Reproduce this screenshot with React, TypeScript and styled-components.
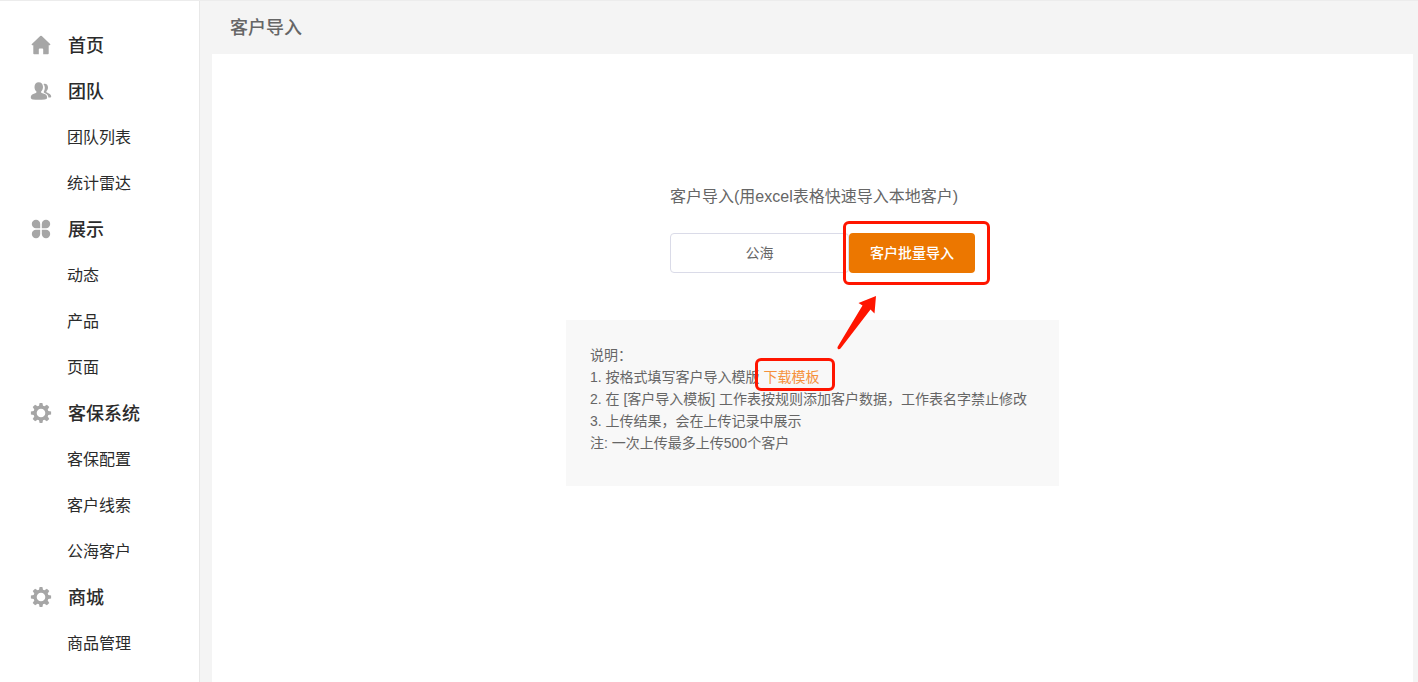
import React from "react";
import styled, { createGlobalStyle } from "styled-components";

const GlobalStyle = createGlobalStyle`
  *, *::before, *::after { box-sizing: border-box; }
  body {
    margin: 0;
    background: #f4f4f4;
    color: #666666;
    font-family: "Liberation Sans", "Noto Sans CJK SC", sans-serif;
    font-size: 14px;
  }
  button, select { font-family: inherit; }
`;

const Page = styled.div`
  display: flex;
  min-height: 100vh;
  border-top: 1px solid #ececec;
`;

const Sidebar = styled.nav`
  flex: none;
  width: 200px;
  padding: 21px 0 0;
  background: #ffffff;
  border-right: 1px solid #e8e8e8;
`;

const NavList = styled.ul`
  margin: 0;
  padding: 0;
  list-style: none;
`;

const NavLink = styled.a`
  display: flex;
  align-items: center;
  height: 46px;
  padding-bottom: 2px;
  color: #2b2b2b;
  text-decoration: none;
`;

const SectionLink = styled(NavLink)`
  gap: 16px;
  padding-left: 30px;
  font-size: 18px;
  font-weight: 500;
`;

const SubLink = styled(NavLink)`
  padding-left: 67px;
  font-size: 16px;
`;

const Icon = styled.svg`
  flex: none;
  width: 22px;
  height: 22px;
  margin-top: 2px;
  fill: #a6a6a6;
`;

const Main = styled.main`
  flex: 1;
  display: flex;
  flex-direction: column;
  padding: 0 5px 0 12px;
`;

const Title = styled.h1`
  margin: 0;
  padding: 2px 0 0 18px;
  font-size: 18px;
  font-weight: 500;
  line-height: 51px;
`;

const Panel = styled.section`
  flex: 1;
  display: flex;
  flex-direction: column;
  align-items: center;
  padding: 131px 24px 48px;
  background: #ffffff;
`;

const Form = styled.form`
  padding-left: 20px;
  margin-bottom: 47px;
`;

const Label = styled.label`
  display: block;
  margin-bottom: 24px;
  font-size: 16px;
  line-height: 24px;
`;

const Controls = styled.div`
  display: flex;
`;

const PoolSelect = styled.select`
  appearance: none;
  width: 179px;
  height: 40px;
  padding: 0;
  border: 1px solid #dadbe8;
  border-radius: 4px;
  background: #ffffff;
  color: #666666;
  font-size: 14px;
  text-align: center;
  text-align-last: center;
`;

const Marked = styled.span`
  position: relative;
  display: inline-block;
`;

const ImportButton = styled.button`
  display: block;
  width: 126px;
  height: 40px;
  padding: 0 0 2px;
  border: 0;
  border-radius: 4px;
  background: #ec7700;
  color: #ffffff;
  font-size: 14px;
  font-weight: 500;
`;

const Marker = styled.span<{ $inset: string }>`
  position: absolute;
  inset: ${(p) => p.$inset};
  border: 3px solid #ff1500;
  border-radius: 6px;
  pointer-events: none;
`;

const Arrow = styled.svg`
  position: absolute;
  top: 62px;
  left: -13px;
  width: 42px;
  height: 56px;
  fill: #ff1500;
  pointer-events: none;
`;

const Notes = styled.div`
  width: 100%;
  max-width: 493px;
  padding: 24px 24px 32px;
  background: #f8f8f8;
  line-height: 22px;
`;

const Line = styled.p`
  margin: 0;
`;

const Download = styled.a`
  color: #f5913c;
  text-decoration: none;
`;

const HomeIcon = () => (
  <Icon viewBox="0 0 22 22" aria-hidden="true">
    <path d="M10.2 2.1a1.1 1.1 0 0 1 1.6 0l8.3 8c.6.6.3 1.2-.5 1.2h-.9v8.100a.8.8 0 0 1-.8.8h-4.700v-4.700a.9.9 0 0 0-.9-.9H9.700a.9.9 0 0 0-.9.9v4.700H4.100a.8.8 0 0 1-.8-.8v-8.100h-.9c-.8 0-1.100-.6-.5-1.200z" />
  </Icon>
);

const TeamIcon = () => (
  <Icon viewBox="0 0 22 22" aria-hidden="true">
    <path d="M8.700 2.300c2.600 0 4.300 1.900 4.300 4.600 0 1.700-.7 3.300-1.700 4.300-.5.600-.3 1.400.5 1.700l2.800 1.100c1.700.7 2.500 1.800 2.500 3.500 0 1.500-1.200 1.800-2.600 1.900-4 .3-8 .3-11.700 0C1.500 19.300.8 18.700.8 17.500c0-1.700.9-2.800 2.500-3.500l2.500-1.100c.8-.4 1-1.100.4-1.700-1-1-1.700-2.600-1.700-4.300 0-2.700 1.700-4.600 4.200-4.600z" />
    <path d="M13.500 4c2.700-.8 4.500 1 4.500 3.400 0 1.500-.6 2.700-1.400 3.600-.5.600-.3 1.200.4 1.500l1.800.9c1.500.7 2.300 1.600 2.400 3 0 .7-.5 1-1.200 1h-1.600c-.1-2.100-1.300-3.400-3.300-4.200-1.500-.6-1.700-1-1-2.200 1.100-2 1.100-4.900-.6-7z" />
  </Icon>
);

const ShowIcon = () => (
  <Icon viewBox="0 0 22 22" aria-hidden="true">
    <path d="M6 1.800a4.200 4.200 0 0 1 4.200 4.200v4.200H6a4.200 4.200 0 0 1 0-8.400z" />
    <path d="M16 1.800a4.200 4.200 0 0 1 0 8.400h-4.200V6A4.200 4.200 0 0 1 16 1.800z" />
    <path d="M6 11.800h4.200V16A4.200 4.200 0 1 1 6 11.800z" />
    <path d="M11.800 11.800H16a4.200 4.200 0 1 1-4.200 4.200z" />
  </Icon>
);

const GearIcon = () => (
  <Icon viewBox="0 0 22 22" aria-hidden="true">
    <path
      fillRule="evenodd"
      d="M9.600.9h2.800l.6 2.800 1.400.6 2.500-1.600 2.400 2.400-1.600 2.500.6 1.400 2.800.6v2.800l-2.800.6-.6 1.400 1.600 2.500-2.400 2.400-2.500-1.600-1.400.6-.6 2.800H9.600L9 18.300l-1.400-.6-2.500 1.600-2.400-2.400 1.600-2.500-.6-1.400-2.800-.6V9.600L3.700 9l.6-1.400-1.600-2.500 2.400-2.400 2.500 1.600L9 3.700zM11 6.700a4.300 4.300 0 1 0 0 8.600 4.300 4.300 0 0 0 0-8.600z"
    />
  </Icon>
);

const sections = [
  { name: "首页", Glyph: HomeIcon, items: [] },
  { name: "团队", Glyph: TeamIcon, items: ["团队列表", "统计雷达"] },
  { name: "展示", Glyph: ShowIcon, items: ["动态", "产品", "页面"] },
  { name: "客保系统", Glyph: GearIcon, items: ["客保配置", "客户线索", "公海客户"] },
  { name: "商城", Glyph: GearIcon, items: ["商品管理"] },
];

export default function App() {
  return (
    <>
      <GlobalStyle />
      <Page>
        <Sidebar>
          <NavList>
            {sections.map(({ name, Glyph, items }) => (
              <li key={name}>
                <SectionLink href="#">
                  <Glyph />
                  {name}
                </SectionLink>
                {items.length > 0 && (
                  <NavList>
                    {items.map((item) => (
                      <li key={item}>
                        <SubLink href="#">{item}</SubLink>
                      </li>
                    ))}
                  </NavList>
                )}
              </li>
            ))}
          </NavList>
        </Sidebar>
        <Main>
          <Title>客户导入</Title>
          <Panel>
            <Form onSubmit={(e) => e.preventDefault()}>
              <Label htmlFor="pool">客户导入(用excel表格快速导入本地客户)</Label>
              <Controls>
                <PoolSelect id="pool" defaultValue="公海">
                  <option>公海</option>
                </PoolSelect>
                <Marked>
                  <ImportButton type="submit">客户批量导入</ImportButton>
                  <Marker $inset="-12px -15px -12px -6px" />
                  <Arrow viewBox="0 0 42 56" aria-hidden="true">
                    <path d="M40 1 38.500 18.500 34.500 14.500 4.500 53.500Q3 55 1.800 53.800 1 53 1.800 51.500L26.500 10.500 22.500 8z" />
                  </Arrow>
                </Marked>
              </Controls>
            </Form>
            <Notes>
              <Line>说明：</Line>
              <Line>
                1. 按格式填写客户导入模版{" "}
                <Marked>
                  <Download href="#">下载模板</Download>
                  <Marker $inset="-8px -16px -3px -8px" />
                </Marked>
              </Line>
              <Line>2. 在 [客户导入模板] 工作表按规则添加客户数据，工作表名字禁止修改</Line>
              <Line>3. 上传结果，会在上传记录中展示</Line>
              <Line>注: 一次上传最多上传500个客户</Line>
            </Notes>
          </Panel>
        </Main>
      </Page>
    </>
  );
}
